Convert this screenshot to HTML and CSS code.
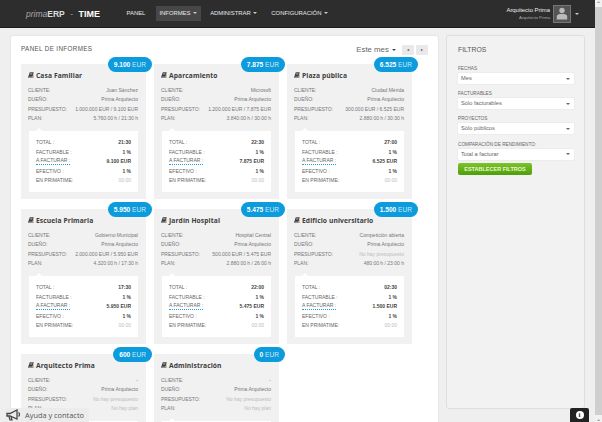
FILE: index.html
```html
<!DOCTYPE html>
<html lang="es">
<head>
<meta charset="utf-8">
<title>primaERP - TIME</title>
<link rel="stylesheet" href="styles.css">
</head>
<body>
<svg class="defs" width="0" height="0"><symbol id="book" viewBox="0 0 10 10"><path d="M3 .5h6.500L7.500 8H2.200c-.8 0-.9 1 0 1h6.200l1.200-5 .4.3L8.700 10H1.600C.4 10 .2 8.600.6 7.500z" fill="#3a3a3a"/><path d="M3.500 2.200h4M3.200 3.700h4" stroke="#f2f2f2" stroke-width=".7"/></symbol></svg>
<div class="app">
  <div class="page">
    <header class="navbar">
      <div class="logo"><i>prima</i><b>ERP</b><span class="logo-dash">-</span><b class="logo-time">TIME</b></div>
      <nav class="nav">
        <a class="nav-item">PANEL</a>
        <a class="nav-item active">INFORMES <s class="caret"></s></a>
        <a class="nav-item">ADMINISTRAR <s class="caret"></s></a>
        <a class="nav-item">CONFIGURACIÓN <s class="caret"></s></a>
      </nav>
      <div class="user">
        <div class="user-text"><div class="user-name">Arquitecto Prima</div><div class="user-sub">Arquitecto Prima</div></div>
        <div class="avatar"><svg width="12" height="13" viewBox="0 0 12 13"><circle cx="6" cy="3.500" r="2.700" fill="#bbb"/><path d="M.8 12.500V9.500C.8 7.600 3 7 6 7s5.200.6 5.200 2.500v3z" fill="#bbb"/></svg></div>
        <s class="caret"></s>
      </div>
    </header>
    <div class="content">
      <main class="panel">
        <div class="panel-head">
          <h1 class="panel-title">PANEL DE INFORMES</h1>
          <div class="period">Este mes <s class="caret dark"></s></div>
          <button class="pager">◂</button>
          <button class="pager">▸</button>
        </div>
        <div class="cards">

          <article class="card">
            <div class="badge"><b>9.100</b> EUR</div>
            <h2 class="card-title"><svg class="book"><use href="#book"/></svg>Casa Familiar</h2>
            <div class="row"><span>CLIENTE:</span><span>Juan Sánchez</span></div>
            <div class="row"><span>DUEÑO:</span><span>Prima Arquitecto</span></div>
            <div class="row"><span>PRESUPUESTO:</span><span>1.000.000 EUR / 9.100 EUR</span></div>
            <div class="row"><span>PLAN:</span><span>5.760:00 h / 21:30 h</span></div>
            <div class="stats">
              <div class="row"><span>TOTAL :</span><b>21:30</b></div>
              <div class="row"><span>FACTURABLE :</span><b>1 %</b></div>
              <div class="row"><span class="dotted">A FACTURAR :</span><b>9.100 EUR</b></div>
              <div class="row"><span>EFECTIVO :</span><b>1 %</b></div>
              <div class="row"><span>EN PRIMATIME:</span><span class="faint">00:00</span></div>
            </div>
          </article>

          <article class="card">
            <div class="badge"><b>7.875</b> EUR</div>
            <h2 class="card-title"><svg class="book"><use href="#book"/></svg>Aparcamiento</h2>
            <div class="row"><span>CLIENTE:</span><span>Microsoft</span></div>
            <div class="row"><span>DUEÑO:</span><span>Prima Arquitecto</span></div>
            <div class="row"><span>PRESUPUESTO:</span><span>1.200.000 EUR / 7.875 EUR</span></div>
            <div class="row"><span>PLAN:</span><span>3.840:00 h / 30:00 h</span></div>
            <div class="stats">
              <div class="row"><span>TOTAL :</span><b>22:30</b></div>
              <div class="row"><span>FACTURABLE :</span><b>1 %</b></div>
              <div class="row"><span class="dotted">A FACTURAR :</span><b>7.875 EUR</b></div>
              <div class="row"><span>EFECTIVO :</span><b>1 %</b></div>
              <div class="row"><span>EN PRIMATIME:</span><span class="faint">00:00</span></div>
            </div>
          </article>

          <article class="card">
            <div class="badge"><b>6.525</b> EUR</div>
            <h2 class="card-title"><svg class="book"><use href="#book"/></svg>Plaza pública</h2>
            <div class="row"><span>CLIENTE:</span><span>Ciudad Mérida</span></div>
            <div class="row"><span>DUEÑO:</span><span>Prima Arquitecto</span></div>
            <div class="row"><span>PRESUPUESTO:</span><span>300.000 EUR / 6.525 EUR</span></div>
            <div class="row"><span>PLAN:</span><span>2.880:00 h / 30:30 h</span></div>
            <div class="stats">
              <div class="row"><span>TOTAL :</span><b>27:00</b></div>
              <div class="row"><span>FACTURABLE :</span><b>1 %</b></div>
              <div class="row"><span class="dotted">A FACTURAR :</span><b>6.525 EUR</b></div>
              <div class="row"><span>EFECTIVO :</span><b>1 %</b></div>
              <div class="row"><span>EN PRIMATIME:</span><span class="faint">00:00</span></div>
            </div>
          </article>

          <article class="card">
            <div class="badge"><b>5.950</b> EUR</div>
            <h2 class="card-title"><svg class="book"><use href="#book"/></svg>Escuela Primaria</h2>
            <div class="row"><span>CLIENTE:</span><span>Gobierno Municipal</span></div>
            <div class="row"><span>DUEÑO:</span><span>Prima Arquitecto</span></div>
            <div class="row"><span>PRESUPUESTO:</span><span>2.000.000 EUR / 5.950 EUR</span></div>
            <div class="row"><span>PLAN:</span><span>4.320:00 h / 17:30 h</span></div>
            <div class="stats">
              <div class="row"><span>TOTAL :</span><b>17:30</b></div>
              <div class="row"><span>FACTURABLE :</span><b>1 %</b></div>
              <div class="row"><span class="dotted">A FACTURAR :</span><b>5.950 EUR</b></div>
              <div class="row"><span>EFECTIVO :</span><b>1 %</b></div>
              <div class="row"><span>EN PRIMATIME:</span><span class="faint">00:00</span></div>
            </div>
          </article>

          <article class="card">
            <div class="badge"><b>5.475</b> EUR</div>
            <h2 class="card-title"><svg class="book"><use href="#book"/></svg>Jardín Hospital</h2>
            <div class="row"><span>CLIENTE:</span><span>Hospital Central</span></div>
            <div class="row"><span>DUEÑO:</span><span>Prima Arquitecto</span></div>
            <div class="row"><span>PRESUPUESTO:</span><span>500.000 EUR / 5.475 EUR</span></div>
            <div class="row"><span>PLAN:</span><span>2.880:00 h / 26:00 h</span></div>
            <div class="stats">
              <div class="row"><span>TOTAL :</span><b>22:00</b></div>
              <div class="row"><span>FACTURABLE :</span><b>1 %</b></div>
              <div class="row"><span class="dotted">A FACTURAR :</span><b>5.475 EUR</b></div>
              <div class="row"><span>EFECTIVO :</span><b>1 %</b></div>
              <div class="row"><span>EN PRIMATIME:</span><span class="faint">00:00</span></div>
            </div>
          </article>

          <article class="card">
            <div class="badge"><b>1.500</b> EUR</div>
            <h2 class="card-title"><svg class="book"><use href="#book"/></svg>Edificio universitario</h2>
            <div class="row"><span>CLIENTE:</span><span>Competición abierta</span></div>
            <div class="row"><span>DUEÑO:</span><span>Prima Arquitecto</span></div>
            <div class="row"><span>PRESUPUESTO:</span><span class="faint">No hay presupuesto</span></div>
            <div class="row"><span>PLAN:</span><span>480:00 h / 23:00 h</span></div>
            <div class="stats">
              <div class="row"><span>TOTAL :</span><b>02:30</b></div>
              <div class="row"><span>FACTURABLE :</span><b>1 %</b></div>
              <div class="row"><span class="dotted">A FACTURAR :</span><b>1.500 EUR</b></div>
              <div class="row"><span>EFECTIVO :</span><b>1 %</b></div>
              <div class="row"><span>EN PRIMATIME:</span><span class="faint">00:00</span></div>
            </div>
          </article>

          <article class="card">
            <div class="badge"><b>600</b> EUR</div>
            <h2 class="card-title"><svg class="book"><use href="#book"/></svg>Arquitecto Prima</h2>
            <div class="row"><span>CLIENTE:</span><span>-</span></div>
            <div class="row"><span>DUEÑO:</span><span>Prima Arquitecto</span></div>
            <div class="row"><span>PRESUPUESTO:</span><span class="faint">No hay presupuesto</span></div>
            <div class="row"><span>PLAN:</span><span class="faint">No hay plan</span></div>
            <div class="stats"></div>
          </article>

          <article class="card">
            <div class="badge"><b>0</b> EUR</div>
            <h2 class="card-title"><svg class="book"><use href="#book"/></svg>Administración</h2>
            <div class="row"><span>CLIENTE:</span><span>-</span></div>
            <div class="row"><span>DUEÑO:</span><span>Prima Arquitecto</span></div>
            <div class="row"><span>PRESUPUESTO:</span><span class="faint">No hay presupuesto</span></div>
            <div class="row"><span>PLAN:</span><span class="faint">No hay plan</span></div>
            <div class="stats"></div>
          </article>

        </div>
      </main>
      <aside class="filters">
        <h2 class="filters-title">FILTROS</h2>
        <label class="f-label">FECHAS</label>
        <div class="select">Mes</div>
        <label class="f-label">FACTURABLES</label>
        <div class="select">Sólo facturables</div>
        <label class="f-label">PROYECTOS</label>
        <div class="select">Sólo públicos</div>
        <label class="f-label">COMPARACIÓN DE RENDIMIENTO:</label>
        <div class="select">Total a facturar</div>
        <button class="apply">ESTABLECER FILTROS</button>
      </aside>
    </div>
  </div>
  <div class="scrollbar"><span class="sb-btn">⌃</span><span class="sb-track"></span><span class="sb-btn">⌄</span></div>
</div>
<div class="help">
  <svg width="15" height="12" viewBox="0 0 15 12"><path d="M1 4.500h3L11 1v9L4 7H1z" fill="none" stroke="#444" stroke-width="1.300"/><path d="M12.500 3.500c1.300 1 1.300 3 0 4M3 7.500l1 3.500h2L5 8" fill="none" stroke="#444" stroke-width="1.200"/></svg>
  <span>Ayuda y contacto</span>
</div>
<div class="info"><span class="info-dot">i</span></div>
</body>
</html>
```
FILE: styles.css
```css
* { box-sizing: border-box; }
html, body { margin: 0; height: 100%; overflow: hidden; }
body { font-family: "Liberation Sans", Arial, sans-serif; color: #666; background: #efefef; }
.defs { position: absolute; }
.app { display: flex; height: 422px; }
.page { flex: 1; min-width: 0; display: flex; flex-direction: column; }

.navbar { flex: none; height: 28px; background: #2d2d2d; border-bottom: 1px solid #1c1c1c; display: flex; align-items: center; padding: 0 16px 0 26px; color: #eee; }
.logo { width: 92px; font-size: 8.500px; color: #ddd; white-space: nowrap; }
.logo i { color: #aaa; font-size: 8.500px; }
.logo b { color: #ddd; }
.logo-dash { margin: 0 5.500px; color: #999; }
.logo-time { color: #fff !important; font-size: 9px; }
.nav { display: flex; align-items: center; margin-left: 5px; gap: 4px; }
.nav-item { height: 15px; line-height: 15px; padding: 0 3.500px; font-size: 5.900px; color: #e8e8e8; white-space: nowrap; }
.nav-item.active { background: #474747; margin: 0 2px 0 3px; }
.nav-item:nth-child(4) { margin-left: 3px; }
.caret { display: inline-block; width: 0; height: 0; border: 2px solid transparent; border-top-color: #ccc; border-bottom: 0; vertical-align: 1px; margin-left: 1px; }
.caret.dark { border-top-color: #444; }
.user { margin-left: auto; display: flex; align-items: center; gap: 3px; text-align: right; }
.user-name { font-size: 5.900px; color: #eee; line-height: 8px; }
.user-sub { font-size: 4.200px; color: #aaa; line-height: 6px; margin-top: 1px; }
.avatar { width: 18px; height: 18px; background: #555; border: 1px solid #777; display: flex; align-items: center; justify-content: center; }

.content { flex: 1; min-height: 0; overflow: hidden; display: flex; align-items: flex-start; padding: 7px 11px 0 10px; gap: 7px; }
.panel { width: 429px; height: 400px; flex: none; overflow: hidden; background: #fff; border: 1px solid #e6e6e6; border-radius: 3px; padding: 8px 10px; }
.panel-head { height: 20px; padding-bottom: 9px; display: flex; align-items: center; }
.panel-title { margin: 0 auto 2px 0; font-size: 6.300px; font-weight: 400; letter-spacing: .35px; color: #555; }
.period { font-size: 7.800px; color: #666; margin-right: 6px; white-space: nowrap; }
.pager { width: 12px; height: 10px; padding: 0; margin-left: 2px; border: 0; border-radius: 1px; background: #e9e9e9; color: #444; font: 4px "DejaVu Sans", sans-serif; }
.period + .pager { margin-left: 0; }

.cards { display: grid; grid-template-columns: repeat(3, 125px); gap: 10px 8px; }
.card { position: relative; height: 135px; background: #f1f1f1; padding: 4px 8px 0 7px; }
.badge { position: absolute; top: -7px; right: -6px; height: 15px; line-height: 15px; padding: 0 6px; border-radius: 8px; background: #0c9bdc; color: #cfeaf7; font-size: 6.600px; white-space: nowrap; }
.badge b { color: #fff; }
.card-title { margin: 0 0 4px; height: 14px; display: flex; align-items: center; font: 700 6.700px "Open Sans", sans-serif; color: #3c3c3c; letter-spacing: .1px; white-space: nowrap; }
.book { width: 6px; height: 6px; margin-right: 2px; flex: none; }
.row { height: 9.400px; line-height: 9.400px; display: flex; justify-content: space-between; font-size: 5px; color: #777; white-space: nowrap; }
.row .faint { color: #bbb; }
.stats { position: relative; margin: 7.400px 0 0 1px; height: 61px; padding: 7.500px 7px 0; background: #fff; }
.stats::before { content: ""; position: absolute; top: -3px; left: 7px; border: 3px solid transparent; border-top: 0; border-bottom-color: #fff; }
.stats .row { color: #666; }
.stats b { color: #444; }
.dotted { line-height: 7px; height: 8px; border-bottom: 1px dotted #1c9fdc; }

.filters { width: 139px; height: 374px; flex: none; background: #f2f2f2; border: 1px solid #dedede; border-radius: 3px; padding: 9px 10px 0 11px; }
.filters-title { margin: 0 0 11px; font-size: 6.800px; font-weight: 400; color: #555; line-height: 9px; }
.f-label { display: block; font-size: 4.700px; color: #666; line-height: 7px; height: 7px; white-space: nowrap; }
.select { position: relative; height: 11px; line-height: 11px; margin: 1px 0 6.200px; padding-left: 3px; background: #fff; border: 0; border-radius: 1px; font-size: 5.700px; color: #666; box-shadow: 0 0 0 1px #ececec; }
.select::after { content: ""; position: absolute; right: 4px; top: 4.500px; border: 2px solid transparent; border-top-color: #666; border-bottom: 0; }
.apply { display: block; width: 74px; height: 12px; margin-top: -3px; padding: 0; border: 0; border-radius: 2px; background: linear-gradient(#7cc52a, #4f9d0d); color: #e8f7d0; font: 700 5.500px "Liberation Sans", sans-serif; white-space: nowrap; }

.scrollbar { flex: none; width: 7px; display: flex; flex-direction: column; background: #cfcfcf; }
.sb-btn { height: 7px; background: #f1f1f1; color: #555; font: 6px/7px "DejaVu Sans", sans-serif; text-align: center; overflow: hidden; }
.sb-track { flex: 1; }

.help { position: fixed; left: 5px; bottom: 0; height: 14px; display: flex; align-items: center; gap: 4px; padding: 0 5px 0 1px; background: #ececec; border-radius: 3px 3px 0 0; color: #555; font: 400 7.400px "Open Sans", sans-serif; }
.info { position: fixed; left: 570px; bottom: 0; width: 19px; height: 14px; background: #222; border-radius: 2px 2px 0 0; display: flex; align-items: center; justify-content: center; }
.info-dot { width: 8px; height: 8px; border-radius: 50%; background: #fff; color: #222; font: 700 7px/8px "Liberation Serif", serif; text-align: center; }
```
